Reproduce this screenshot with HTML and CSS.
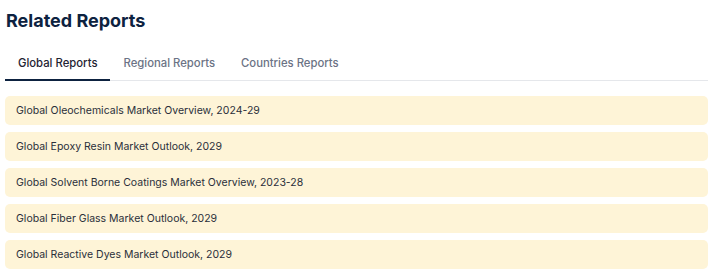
FILE: index.html
```html
<!DOCTYPE html>
<html lang="en">
<head>
    <meta charset="UTF-8">
    <meta name="viewport" content="width=device-width, initial-scale=1.0">
    <title>Related Reports</title>
    <link rel="stylesheet" href="styles.css">
</head>
<body>
    <!-- Related reports block -->
    <section class="related">
        <h2 class="related-title">Related Reports</h2>

        <!-- Tabs -->
        <div class="tabs">
            <button class="tab active">Global Reports</button>
            <button class="tab">Regional Reports</button>
            <button class="tab">Countries Reports</button>
        </div>

        <!-- Report list -->
        <ul class="report-list">
            <li class="report-item"><a href="#">Global Oleochemicals Market Overview, 2024-29</a></li>
            <li class="report-item"><a href="#">Global Epoxy Resin Market Outlook, 2029</a></li>
            <li class="report-item"><a href="#">Global Solvent Borne Coatings Market Overview, 2023-28</a></li>
            <li class="report-item"><a href="#">Global Fiber Glass Market Outlook, 2029</a></li>
            <li class="report-item"><a href="#">Global Reactive Dyes Market Outlook, 2029</a></li>
        </ul>
    </section>
</body>
</html>
```

FILE: styles.css
```css
/* Basic page styling */
body {
    margin: 0;
    background-color: #ffffff;
    font-family: Inter, "Noto Sans", sans-serif;
}
.related {
    padding: 5px 6px 0 5px;
}
.related-title {
    margin: 0 0 0 1px;
    font-size: 18px;
    line-height: 28px;
    font-weight: 700;
    color: #0d2240;
    padding-top: 2px;
}
.tabs {
    display: flex;
    margin-top: 14px;
    border-bottom: 1px solid #e5e7eb;
}
.tab {
    background: none;
    border: none;
    border-bottom: 2px solid transparent;
    margin-bottom: -1px;
    padding: 7px 13px 9px 13px;
    font-family: inherit;
    font-size: 11.3px;
    font-weight: 500;
    color: #6b7385;
    cursor: pointer;
}
.tab.active {
    color: #1f2433;
    border-bottom-color: #0d2240;
}
.report-list {
    list-style: none;
    margin: 15px 0 0 0;
    padding: 0;
    display: flex;
    flex-direction: column;
    gap: 7px;
}
.report-item {
    background-color: #fef4d7;
    border-radius: 5px;
    height: 29px;
    display: flex;
    align-items: center;
    padding: 0 11px;
}
.report-item a {
    color: #2a2f3a;
    text-decoration: none;
    font-size: 10.5px;
}
```
